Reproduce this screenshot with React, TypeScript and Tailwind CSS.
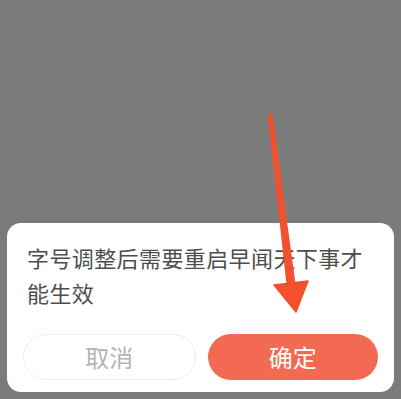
export default function App() {
  return (
    <div
      className="relative flex h-[399px] w-full flex-col justify-end overflow-hidden bg-[#7b7b7b] px-[7px] pb-[7px]"
      style={{ fontFamily: '"Noto Sans CJK SC", "Noto Sans", sans-serif' }}
    >
      {/* 提示弹窗 */}
      <div className="rounded-[14px] bg-white px-[16px] pb-[12px] pt-[17px]">
        <p className="pl-[4px] pr-[6px] text-[22px] leading-[35px] tracking-[0.4px] text-[#4d4d4d]">
          字号调整后需要重启早闻天下事才能生效
        </p>
        <div className="mt-[24px] flex gap-[12px]">
          <button className="h-[46px] flex-1 rounded-full border border-[#ececec] bg-white text-[24px] text-[#b4b4b4]">
            取消
          </button>
          <button className="h-[46px] flex-1 rounded-full bg-[#f26a51] text-[24px] text-white">
            确定
          </button>
        </div>
      </div>

      {/* 标注箭头 */}
      <svg
        className="pointer-events-none absolute left-0 top-0"
        width="401"
        height="399"
        viewBox="0 0 401 399"
      >
        <polygon points="267.5,114 272.5,114 295.5,284 286.5,284" fill="#f2502f" />
        <polygon points="274,285 308,281 296,312" fill="#f2502f" strokeLinejoin="round" stroke="#f2502f" strokeWidth="1.5" />
      </svg>
    </div>
  );
}
